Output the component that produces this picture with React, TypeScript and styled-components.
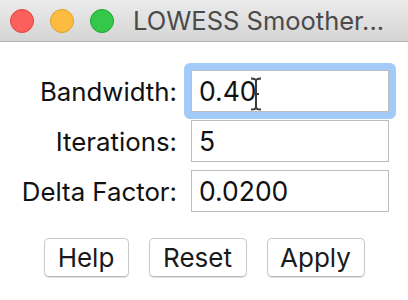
import React from "react";
import styled, { createGlobalStyle } from "styled-components";

const Global = createGlobalStyle`
  html, body { margin: 0; padding: 0; background: #ffffff; }
  body { font-family: Inter, "Liberation Sans", Arial, sans-serif; }
`;

const Window = styled.div`
  width: 408px;
  height: 300px;
  background: #ffffff;
  overflow: hidden;
  display: flex;
  flex-direction: column;
`;

const TitleBar = styled.div`
  height: 42px;
  box-sizing: border-box;
  background: linear-gradient(#ebebeb, #d5d5d5);
  border-bottom: 1px solid #b4b4b4;
  display: flex;
  align-items: center;
  padding-left: 10px;
  gap: 16px;
`;

const Lights = styled.div`
  display: flex;
  gap: 16px;
`;

const Light = styled.div<{ $bg: string; $bd: string }>`
  width: 24px;
  height: 24px;
  border-radius: 50%;
  box-sizing: border-box;
  background: ${(p) => p.$bg};
  border: 1px solid ${(p) => p.$bd};
`;

const Title = styled.div`
  font-size: 25.5px;
  color: #4a4a4a;
  white-space: nowrap;
  margin-left: 3px;
`;

const Form = styled.div`
  display: grid;
  grid-template-columns: 177px 198px;
  grid-auto-rows: 42px;
  column-gap: 14px;
  row-gap: 8px;
  margin-top: 28px;
`;

const Label = styled.label`
  justify-self: end;
  align-self: center;
  font-size: 25.8px;
  color: #111111;
  white-space: nowrap;
`;

const Field = styled.div`
  position: relative;
  box-sizing: border-box;
  border: 1px solid #bdbdbd;
  background: #ffffff;
  display: flex;
  align-items: center;
  padding-left: 7px;
  font-size: 26.5px;
  color: #111111;
`;

const Ring = styled.div`
  position: absolute;
  left: -8px;
  top: -8px;
  right: -8px;
  bottom: -8px;
  border: 7px solid #a3cbf9;
  border-radius: 6px;
  pointer-events: none;
`;

const Cursor = styled.svg`
  position: absolute;
  left: 57px;
  top: 6px;
  pointer-events: none;
`;

const Buttons = styled.div`
  display: flex;
  justify-content: center;
  gap: 20px;
  margin-top: 26px;
`;

const Button = styled.button<{ $w: number }>`
  width: ${(p) => p.$w}px;
  height: 39px;
  box-sizing: border-box;
  background: #ffffff;
  border: 1px solid #cacaca;
  border-bottom-color: #b8b8b8;
  border-radius: 5px;
  box-shadow: 0 1px 1px rgba(0, 0, 0, 0.12);
  font-family: Inter, "Liberation Sans", Arial, sans-serif;
  font-size: 26px;
  color: #1a1a1a;
  padding: 0;
`;

export default function App() {
  return (
    <Window>
      <Global />
      <TitleBar>
        <Lights>
          <Light $bg="#fc605c" $bd="#e0443e" />
          <Light $bg="#fdbc40" $bd="#dea123" />
          <Light $bg="#34c84a" $bd="#1fa52f" />
        </Lights>
        <Title>LOWESS Smoother...</Title>
      </TitleBar>
      <Form>
        <Label>Bandwidth:</Label>
        <Field>
          <Ring />
          0.40
          <Cursor width="14" height="34" viewBox="0 0 14 34">
            <path
              d="M2 1.5 Q7 1.5 7 4 Q7 1.5 12 1.5 M7 4 V30 M2 32.5 Q7 32.5 7 30 Q7 32.5 12 32.5 M4 17 H10"
              stroke="#3a3a3a"
              strokeWidth="2"
              fill="none"
            />
          </Cursor>
        </Field>
        <Label>Iterations:</Label>
        <Field>5</Field>
        <Label>Delta Factor:</Label>
        <Field>0.0200</Field>
      </Form>
      <Buttons>
        <Button $w={85}>Help</Button>
        <Button $w={98}>Reset</Button>
        <Button $w={98}>Apply</Button>
      </Buttons>
    </Window>
  );
}
